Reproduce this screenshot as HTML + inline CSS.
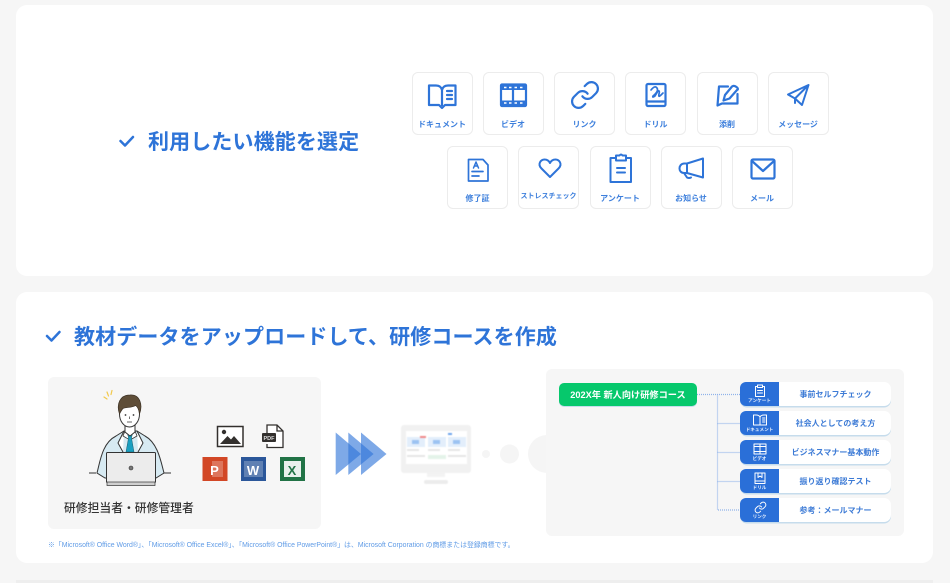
<!DOCTYPE html>
<html lang="ja"><head><meta charset="utf-8"><title>研修コース</title>
<style>
html,body{margin:0;padding:0;background:#f6f6f6}
body{width:950px;height:583px;overflow:hidden;position:relative;font-family:"Liberation Sans","Noto Sans CJK JP",sans-serif;color:#2e74d8}
div{position:absolute;box-sizing:border-box}
#w{left:0;top:0;width:950px;height:583px;background:#f6f6f6;filter:blur(.3px)}
.card{left:16px;width:917px;height:271px;background:#fff;border-radius:11px}
.h{font-size:21px;font-weight:700;line-height:30px;white-space:nowrap;color:#2e74d8;letter-spacing:.12px}
.t{width:60.500px;height:63px;background:#fff;border:1px solid #ececec;border-radius:6px}
.l{width:80px;text-align:center;font-size:8px;font-weight:700;line-height:12px;white-space:nowrap;color:#3d7fdc}
.p{left:740px;width:151px;height:24px;background:#fff;border-radius:7px;box-shadow:0 1.500px 0 #c6dcec}
.b{left:740px;width:39px;height:24px;background:#2a6fd8;border-radius:6px 0 0 6px}
.s{left:740px;width:39px;text-align:center;font-size:4.600px;font-weight:700;line-height:6px;color:#e4eefc;white-space:nowrap}
.r{left:780px;width:111px;text-align:center;font-size:8px;font-weight:700;line-height:12px;color:#3d7bd6;white-space:nowrap}
svg{position:absolute;left:0;top:0}
</style></head><body><div id="w">
<div class="card" style="top:5px"></div>
<div class="card" style="top:292px"></div>
<div style="left:16px;top:580px;width:917px;height:3px;background:#eeeeee"></div>

<div class="h" style="left:148px;top:128px">利用したい機能を選定</div>
<div class="h" style="left:74px;top:323px">教材データをアップロードして、研修コースを作成</div>

<div class="t" style="left:412px;top:72px"></div><div class="t" style="left:483px;top:72px"></div><div class="t" style="left:554px;top:72px"></div><div class="t" style="left:625px;top:72px"></div><div class="t" style="left:697px;top:72px"></div><div class="t" style="left:768px;top:72px"></div>
<div class="t" style="left:447px;top:146px"></div><div class="t" style="left:518px;top:146px"></div><div class="t" style="left:590px;top:146px"></div><div class="t" style="left:661px;top:146px"></div><div class="t" style="left:732px;top:146px"></div>

<div class="l" style="left:402px;top:118.500px">ドキュメント</div><div class="l" style="left:473px;top:118.500px">ビデオ</div><div class="l" style="left:544.500px;top:118.500px">リンク</div><div class="l" style="left:615.500px;top:118.500px">ドリル</div><div class="l" style="left:687px;top:118.500px">添削</div><div class="l" style="left:758px;top:118.500px">メッセージ</div>
<div class="l" style="left:437.500px;top:192.500px">修了証</div><div class="l" style="left:508.500px;top:190.500px;font-size:7px">ストレスチェック</div><div class="l" style="left:580px;top:192.500px">アンケート</div><div class="l" style="left:651px;top:192.500px">お知らせ</div><div class="l" style="left:722px;top:192.500px">メール</div>

<div style="left:48px;top:376.500px;width:273px;height:152.500px;background:#f6f6f6;border-radius:6px"></div>
<div style="left:64px;top:499px;font-size:11.800px;font-weight:500;line-height:18px;color:#333;white-space:nowrap">研修担当者・研修管理者</div>
<div style="left:48px;top:541px;font-size:6.900px;line-height:10px;color:#5f9be6;white-space:nowrap">※「Microsoft® Office Word®」、「Microsoft® Office Excel®」、「Microsoft® Office PowerPoint®」は、Microsoft Corporation の商標または登録商標です。</div>

<svg width="950" height="583" viewBox="0 0 950 583">
<circle cx="486" cy="454" r="4" fill="#f5f5f5"/><circle cx="509.500" cy="454" r="9.500" fill="#f5f5f5"/><circle cx="547" cy="454" r="19" fill="#f5f5f5"/>
<rect x="546" y="369" width="358" height="167" rx="6" fill="#f6f6f6"/>

<g fill="none" stroke="#2e74d8" stroke-width="2.200" stroke-linecap="round" stroke-linejoin="round">
<path d="M120.500 141l4.500 4.500 8-8.500M47 336l4.500 4.500 8-8.500" stroke-width="2.500"/>
<path d="M442 90Q441 85.500 436 85.500H429V105H439L442 108L445 105H455.500V85.500H448Q443 85.500 442 90V105M447 91H452M447 95H452M447 99H452"/>
<rect x="501" y="84.500" width="25" height="21.500" rx="1"/><path d="M513 85V105.500"/>
<rect x="501" y="85" width="25" height="5" fill="#2e74d8" stroke="none"/><rect x="501" y="100.500" width="25" height="5" fill="#2e74d8" stroke="none"/>
<path d="M504 87.500h2.500M509 87.500h2.500M514.500 87.500h2.500M520 87.500h2.500M504 103h2.500M509 103h2.500M514.500 103h2.500M520 103h2.500" stroke-width="1.500" stroke="#fff" stroke-linecap="butt"/>
<g transform="translate(569.400 79.400) scale(1.300)" stroke-width="1.700"><path d="M10 13a5 5 0 0 0 7.540.540l3-3a5 5 0 0 0-7.070-7.070l-1.720 1.710"/><path d="M14 11a5 5 0 0 0-7.540-.540l-3 3a5 5 0 0 0 7.070 7.070l1.710-1.710"/></g>
<rect x="646.500" y="84" width="19" height="22" rx="1.500"/><path d="M646.500 101.500H665.500"/><path d="M651 90Q655 85 657 88T653 96Q652 98 655 96L658 91Q660 90 659 94T661 95L663 93" stroke-width="1.700"/>
<path d="M728 86.500H719L717.500 105.500L722 103.500H737.500V94"/><path d="M723.500 100.500L725 95L732 86.500Q734 85 736.500 87T737 90L729.500 98.500Z"/>
<path d="M808.500 85L788 94.500L795 98.500L802 105L808.500 85ZM808.500 85L795 98.500V103" stroke-width="2"/>
<path d="M468.500 159.500H483L488 165V181H468.500ZM472 171.500H483M472 176H479" stroke-width="1.700"/><path d="M473.500 168L476 162L478.500 168M474.500 166H477.500" stroke-width="1.500"/>
<path d="M550 177L541.500 168.500C537 164 541 159.500 544.500 159.500 547 159.500 549 161 550 163 551 161 553 159.500 555.500 159.500 559 159.500 563 164 558.500 168.500Z" stroke-width="2"/>
<path d="M616 158H610.500V182H631V158H626M616 155.500V160.500H626V155.500H622.500Q621 153.500 619.500 155.500ZM617 168H625M617 172.500H625" stroke-width="2"/>
<path d="M687 163.500L703 158.500V177.500L687 173ZM687 163.500H684C678 164 678 173 684 173H687M684 173L687 177.500Q689 178.500 691 177.500" stroke-width="2"/>
<rect x="751.500" y="159.500" width="23" height="19" rx="1.500"/><path d="M752 161L763 171L774 161"/>
</g>

<g fill="#2e74d8" fill-opacity=".62"><path d="M335.700 432.500L361 454 335.700 475Z"/><path d="M348.300 432.500L373.600 454 348.300 475Z"/><path d="M361 432.500L386.500 454 361 475Z"/></g>

<g style="filter:blur(.6px)">
<rect x="401" y="425" width="70" height="48" rx="3" fill="#f1f1f1"/><rect x="406" y="431" width="61" height="33" fill="#fff"/>
<rect x="427" y="473" width="18" height="4" fill="#f3f3f3"/><rect x="424" y="480" width="24" height="4" rx="2" fill="#ececec"/>
<g fill="#e3eefb"><rect x="407" y="437" width="18" height="10"/><rect x="428" y="437" width="18" height="10"/><rect x="448" y="437" width="18" height="10"/></g>
<g fill="#9cc3f2"><rect x="412" y="440" width="7" height="4"/><rect x="433" y="440" width="7" height="4"/><rect x="453" y="440" width="7" height="4"/></g>
<g fill="#e6e6e6"><rect x="407" y="449" width="12" height="2"/><rect x="428" y="449" width="12" height="2"/><rect x="448" y="449" width="12" height="2"/><rect x="407" y="455" width="18" height="2"/><rect x="428" y="455" width="18" height="4" fill="#e4f3e9"/><rect x="448" y="455" width="18" height="2"/></g>
<rect x="420" y="436" width="6" height="2" fill="#f08a8a"/><rect x="448" y="433" width="4" height="2" fill="#6ea5ec"/>
</g>

<g>
<path d="M89 473H96M164 473H171" stroke="#333" stroke-width="1"/>
<path d="M97 473C100 462 102 443 116 436L124 431H137L145 436C158 443 161 462 164 473L156 478H105Z" fill="#d7eaf2" stroke="#333" stroke-width="1"/>
<path d="M124 431L118 443 123 452M137 431L143 443 138 452" fill="#fff" stroke="#333" stroke-width="1"/>
<path d="M125 431L130 436 135 431 137 436 130 440 123 436Z" fill="#fff" stroke="#333" stroke-width=".8"/>
<path d="M127.500 433.500H132.500L131.500 438 134 452H126L128.500 438Z" fill="#1a9fc0" stroke="#1b5b6c" stroke-width=".5"/>
<path d="M125 423V432L130 436 135 432V423Z" fill="#fff" stroke="#333" stroke-width="1"/>
<ellipse cx="129.500" cy="414" rx="10" ry="13" fill="#fff" stroke="#333" stroke-width="1"/>
<path d="M119.500 414C116 404 120 395 130 395 140 394 143 405 139.500 414 139 410 138 407 135.500 405.500 131 408.500 125 406.500 122.500 409 121 411 120.500 412 119.500 414Z" fill="#5f4e38" stroke="#3c3226" stroke-width=".7"/>
<circle cx="125.500" cy="415" r=".9" fill="#333"/><circle cx="133.500" cy="415" r=".9" fill="#333"/><path d="M127 422H132M129.500 416.500V419" stroke="#333" stroke-width=".7" fill="none"/>
<path d="M104 397L107 399M107 392L108.500 396M112 390.500L111 394.500" stroke="#f2c94c" stroke-width="1.200" stroke-linecap="round"/>
<rect x="106.500" y="452.500" width="49" height="30" rx="1" fill="#ececec" stroke="#333" stroke-width="1"/>
<rect x="107" y="482" width="48" height="3.500" fill="#cfcfcf" stroke="#333" stroke-width=".7"/>
<circle cx="131" cy="468" r="2" fill="#777" stroke="#333" stroke-width=".6"/>

<rect x="217.500" y="426.500" width="25.500" height="20" fill="#fff" stroke="#33302e" stroke-width="1.500"/>
<circle cx="224" cy="432" r="2.200" fill="#33302e"/><path d="M220 444L227.500 436 231 439.500 234 436 241 444Z" fill="#33302e"/>
<path d="M267 438V425H277L283 431V447.500H267V444" fill="#fff" stroke="#33302e" stroke-width="1.300"/><path d="M277 425V431H283" fill="none" stroke="#33302e" stroke-width="1.300"/>
<rect x="262" y="433" width="14" height="9" rx="1" fill="#33302e"/>
<text x="269" y="440" text-anchor="middle" font-size="5.500" font-weight="700" fill="#ddd" font-family="Liberation Sans">PDF</text>

<rect x="202.500" y="457" width="25" height="24" fill="#d24726"/><rect x="212" y="461" width="11" height="16" fill="#fff" fill-opacity=".25"/>
<text x="214.500" y="475" text-anchor="middle" font-size="13" font-weight="700" fill="#fff" font-family="Liberation Sans">P</text>
<rect x="241" y="457" width="25" height="24" fill="#2b579a"/><rect x="244" y="461" width="19" height="16" fill="#fff" fill-opacity=".25"/>
<text x="253" y="475" text-anchor="middle" font-size="13" font-weight="700" fill="#fff" font-family="Liberation Sans">W</text>
<rect x="280" y="457" width="25" height="24" fill="#217346"/><rect x="284" y="461" width="17" height="16" fill="#fff" fill-opacity=".9"/>
<text x="292" y="475" text-anchor="middle" font-size="13" font-weight="700" fill="#217346" font-family="Liberation Sans">X</text>
</g>

<path d="M697 394.500H740M717.500 394.500V510H740M717.500 423.500H740M717.500 452.500H740M717.500 481.500H740" fill="none" stroke="#8fb2ea" stroke-width="1.200" stroke-dasharray="1 1"/>
</svg>

<div style="left:559px;top:382.500px;width:138px;height:23.500px;background:#06c86c;border-radius:5px;box-shadow:0 1px 0 #c6dcec;color:#fff;font-size:9.200px;font-weight:700;line-height:24px;text-align:center;white-space:nowrap">202X年 新人向け研修コース</div>

<div class="p" style="top:382px"></div><div class="b" style="top:382px"></div>
<div class="p" style="top:411px"></div><div class="b" style="top:411px"></div>
<div class="p" style="top:440px"></div><div class="b" style="top:440px"></div>
<div class="p" style="top:469px"></div><div class="b" style="top:469px"></div>
<div class="p" style="top:498px"></div><div class="b" style="top:498px"></div>

<div class="s" style="top:398px">アンケート</div><div class="s" style="top:427px">ドキュメント</div><div class="s" style="top:456px">ビデオ</div><div class="s" style="top:485px">ドリル</div><div class="s" style="top:514px">リンク</div>
<div class="r" style="top:389px">事前セルフチェック</div>
<div class="r" style="top:418px">社会人としての考え方</div>
<div class="r" style="top:447px">ビジネスマナー基本動作</div>
<div class="r" style="top:476px">振り返り確認テスト</div>
<div class="r" style="top:505px">参考：メールマナー</div>

<svg width="950" height="583" viewBox="0 0 950 583">
<g fill="none" stroke="#fff" stroke-width="1" stroke-linejoin="round" stroke-linecap="round">
<path d="M757 386.500H755.500V396.500H764.500V386.500H763M757.500 385V387.500H762.500V385H757.500ZM757.500 390.500H762.500M757.500 393H762.500"/>
<path d="M760 417Q759 415 756 415H753.500V425H766.500V415H764Q761 415 760 417V425M762.500 418H765M762.500 420H765M762.500 422H765"/>
<rect x="754" y="444" width="12" height="10"/><path d="M754 446.500H766M754 451.500H766M760 444V454"/>
<rect x="755" y="473" width="10" height="10.500"/><path d="M755 481H765M758 473V477.500L760 476 762 477.500V473"/>
<g transform="translate(754 501) scale(.54)" stroke-width="1.800"><path d="M10 13a5 5 0 0 0 7.540.540l3-3a5 5 0 0 0-7.070-7.070l-1.720 1.710"/><path d="M14 11a5 5 0 0 0-7.540-.540l-3 3a5 5 0 0 0 7.070 7.070l1.710-1.710"/></g>
</g>
</svg>
</div></body></html>
